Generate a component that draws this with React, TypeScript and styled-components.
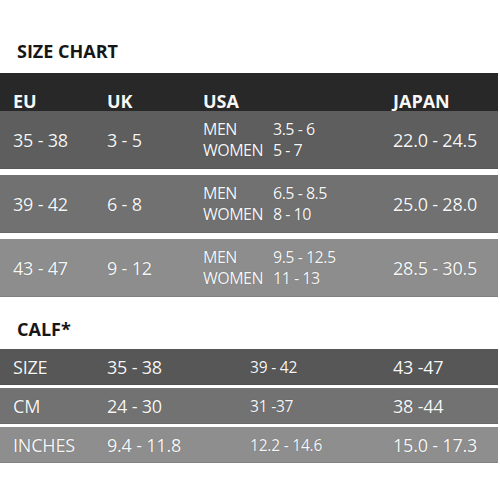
import styled, { createGlobalStyle } from "styled-components"

const GlobalStyle = createGlobalStyle`
    body {
        margin: 0;
        background: #ffffff;
        font-family: "Open Sans", "Noto Sans", sans-serif;
    }
`

const Page = styled.main`
    width: 500px;
    height: 500px;
    padding-top: 41px;
    box-sizing: border-box;
    background: #ffffff;
`

interface TitleProps {
    gapBelow: number
    gapAbove?: number
}

const Title = styled.h2<TitleProps>`
    margin: ${(props) => props.gapAbove || 0}px 0 ${(props) => props.gapBelow}px 17px;
    font-size: 18px;
    line-height: 20px;
    font-weight: 700;
    color: #161616;
`

const Table = styled.section`
    width: 498px;
    display: flex;
    flex-direction: column;
`

const SizeGrid = styled.div`
    display: grid;
    grid-template-columns: 94px 96px 70px 120px 1fr;
    align-items: center;
    padding-left: 13px;
    color: #f7f7f7;
    text-shadow: 0 0 1px rgba(0, 0, 0, 0.35);
`

const HeaderRow = styled(SizeGrid)`
    height: 38px;
    box-sizing: border-box;
    padding-top: 18px;
    align-items: start;
    background: #282828;
    font-size: 18px;
    line-height: 20px;
    font-weight: 700;
`

interface ShadeProps {
    shade: string
}

const SizeRow = styled(SizeGrid)<ShadeProps>`
    height: 58px;
    background: ${(props) => props.shade};
    border-bottom: 1px solid rgba(0, 0, 0, 0.08);
    box-sizing: border-box;
    & + & {
        margin-top: 6px;
    }
`

const HeaderCell = styled.div<{ span?: number }>`
    grid-column: span ${(props) => props.span || 1};
`

const Value = styled.div`
    font-size: 18px;
    letter-spacing: -0.2px;
`

const Gender = styled.div`
    display: flex;
    flex-direction: column;
    font-size: 16px;
    line-height: 21px;
    letter-spacing: -0.5px;
`

const CalfRow = styled.div<ShadeProps>`
    height: 36px;
    display: grid;
    grid-template-columns: 94px 143px 143px 1fr;
    align-items: center;
    padding-left: 13px;
    background: ${(props) => props.shade};
    border-bottom: 1px solid rgba(0, 0, 0, 0.08);
    box-sizing: border-box;
    color: #f7f7f7;
    text-shadow: 0 0 1px rgba(0, 0, 0, 0.35);
    font-size: 18px;
    letter-spacing: -0.2px;
    & + & {
        margin-top: 3px;
    }
`

const SmallValue = styled.div`
    font-size: 15.5px;
    letter-spacing: -0.2px;
`

const sizes = [
    { eu: "35 - 38", uk: "3 - 5", men: "3.5 - 6", women: "5 - 7", jp: "22.0 - 24.5", shade: "#5e5e5e" },
    { eu: "39 - 42", uk: "6 - 8", men: "6.5 - 8.5", women: "8 - 10", jp: "25.0 - 28.0", shade: "#717171" },
    { eu: "43 - 47", uk: "9 - 12", men: "9.5 - 12.5", women: "11 - 13", jp: "28.5 - 30.5", shade: "#8d8d8d" },
]

const calf = [
    { label: "SIZE", a: "35 - 38", b: "39 - 42", c: "43 -47", shade: "#575757" },
    { label: "CM", a: "24 - 30", b: "31 -37", c: "38 -44", shade: "#727272" },
    { label: "INCHES", a: "9.4 - 11.8", b: "12.2 - 14.6", c: "15.0 - 17.3", shade: "#8e8e8e" },
]

const App = () => {
    return (
        <>
            <GlobalStyle />
            <Page>
                <Title gapBelow={12}>SIZE CHART</Title>
                <Table>
                    <HeaderRow>
                        <HeaderCell>EU</HeaderCell>
                        <HeaderCell>UK</HeaderCell>
                        <HeaderCell span={2}>USA</HeaderCell>
                        <HeaderCell>JAPAN</HeaderCell>
                    </HeaderRow>
                    {sizes.map((row) => (
                        <SizeRow key={row.eu} shade={row.shade}>
                            <Value>{row.eu}</Value>
                            <Value>{row.uk}</Value>
                            <Gender>
                                <span>MEN</span>
                                <span>WOMEN</span>
                            </Gender>
                            <Gender>
                                <span>{row.men}</span>
                                <span>{row.women}</span>
                            </Gender>
                            <Value>{row.jp}</Value>
                        </SizeRow>
                    ))}
                </Table>
                <Title gapAbove={22} gapBelow={10}>
                    CALF*
                </Title>
                <Table>
                    {calf.map((row) => (
                        <CalfRow key={row.label} shade={row.shade}>
                            <div>{row.label}</div>
                            <div>{row.a}</div>
                            <SmallValue>{row.b}</SmallValue>
                            <div>{row.c}</div>
                        </CalfRow>
                    ))}
                </Table>
            </Page>
        </>
    )
}

export default App
